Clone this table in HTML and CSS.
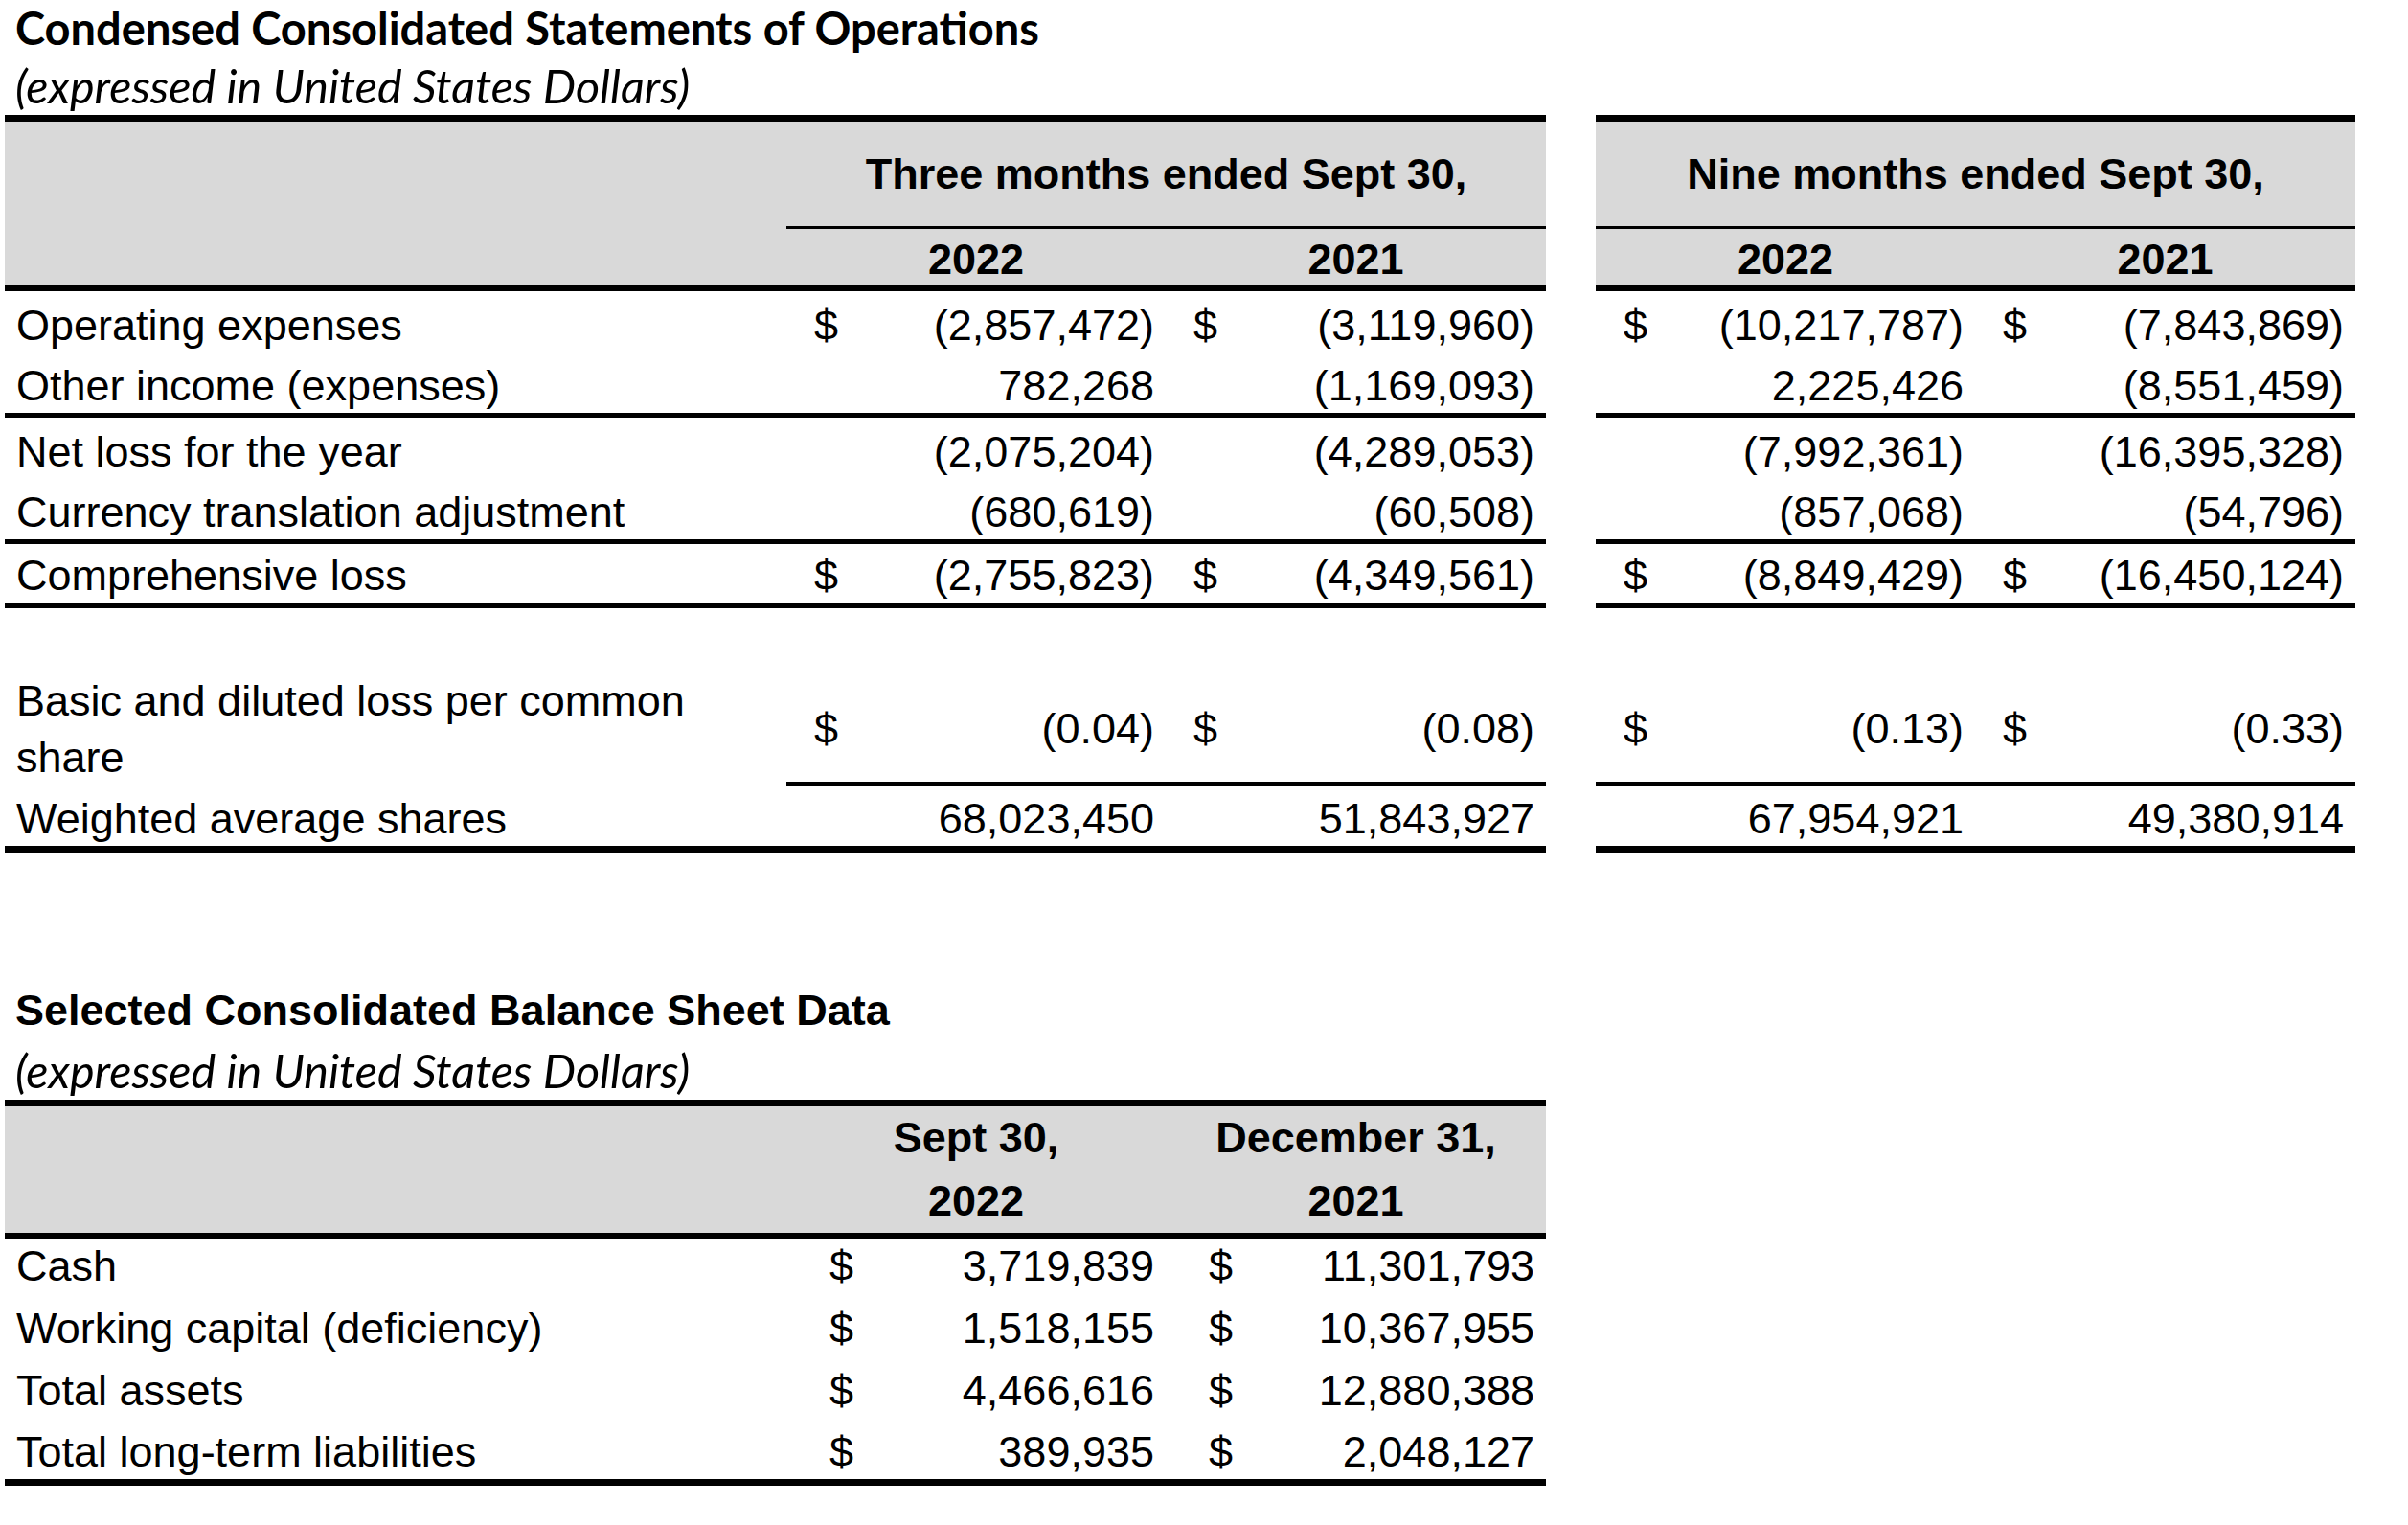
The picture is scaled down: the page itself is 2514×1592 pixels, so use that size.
FILE: index.html
```html
<!DOCTYPE html>
<html lang="en">
<head>
<meta charset="utf-8">
<title>Condensed Consolidated Statements of Operations</title>
<link rel="stylesheet" href="styles.css">
</head>
<body>
<div class="page">
  <div class="doc-title">Condensed Consolidated Statements of Operations</div>
  <div class="doc-sub">(expressed in United States Dollars)</div>

  <div class="stmt">
    <div class="row head1">
      <div class="c lab gray bt7"></div>
      <div class="c grp gray bt7 bb3">Three months ended Sept 30,</div>
      <div class="c gap"></div>
      <div class="c grp gray bt7 bb3">Nine months ended Sept 30,</div>
    </div>
    <div class="row head2">
      <div class="c lab gray bb6"></div>
      <div class="c yr gray bb6">2022</div>
      <div class="c yr gray bb6">2021</div>
      <div class="c gap"></div>
      <div class="c yr gray bb6">2022</div>
      <div class="c yr gray bb6">2021</div>
    </div>

    <div class="row r66 body">
      <div class="c lab">Operating expenses</div>
      <div class="c num"><span>$</span><span>(2,857,472)</span></div>
      <div class="c num"><span>$</span><span>(3,119,960)</span></div>
      <div class="c gap"></div>
      <div class="c num"><span>$</span><span>(10,217,787)</span></div>
      <div class="c num"><span>$</span><span>(7,843,869)</span></div>
    </div>
    <div class="row r66 body">
      <div class="c lab bb5">Other income (expenses)</div>
      <div class="c num bb5"><span class="v">782,268</span></div>
      <div class="c num bb5"><span class="v">(1,169,093)</span></div>
      <div class="c gap"></div>
      <div class="c num bb5"><span class="v">2,225,426</span></div>
      <div class="c num bb5"><span class="v">(8,551,459)</span></div>
    </div>
    <div class="row r66 body">
      <div class="c lab">Net loss for the year</div>
      <div class="c num"><span class="v">(2,075,204)</span></div>
      <div class="c num"><span class="v">(4,289,053)</span></div>
      <div class="c gap"></div>
      <div class="c num"><span class="v">(7,992,361)</span></div>
      <div class="c num"><span class="v">(16,395,328)</span></div>
    </div>
    <div class="row r66 body">
      <div class="c lab bb5">Currency translation adjustment</div>
      <div class="c num bb5"><span class="v">(680,619)</span></div>
      <div class="c num bb5"><span class="v">(60,508)</span></div>
      <div class="c gap"></div>
      <div class="c num bb5"><span class="v">(857,068)</span></div>
      <div class="c num bb5"><span class="v">(54,796)</span></div>
    </div>
    <div class="row r67 body">
      <div class="c lab bb6">Comprehensive loss</div>
      <div class="c num bb6"><span>$</span><span>(2,755,823)</span></div>
      <div class="c num bb6"><span>$</span><span>(4,349,561)</span></div>
      <div class="c gap"></div>
      <div class="c num bb6"><span>$</span><span>(8,849,429)</span></div>
      <div class="c num bb6"><span>$</span><span>(16,450,124)</span></div>
    </div>

    <div class="spacer"></div>

    <div class="row r120 body">
      <div class="c lab wrap">Basic and diluted loss per common<br>share</div>
      <div class="c num bb5"><span>$</span><span>(0.04)</span></div>
      <div class="c num bb5"><span>$</span><span>(0.08)</span></div>
      <div class="c gap"></div>
      <div class="c num bb5"><span>$</span><span>(0.13)</span></div>
      <div class="c num bb5"><span>$</span><span>(0.33)</span></div>
    </div>
    <div class="row r69 body">
      <div class="c lab bb7">Weighted average shares</div>
      <div class="c num bb7"><span class="v">68,023,450</span></div>
      <div class="c num bb7"><span class="v">51,843,927</span></div>
      <div class="c gap"></div>
      <div class="c num bb7"><span class="v">67,954,921</span></div>
      <div class="c num bb7"><span class="v">49,380,914</span></div>
    </div>
  </div>

  <div class="bs-title">Selected Consolidated Balance Sheet Data</div>
  <div class="doc-sub bs-sub">(expressed in United States Dollars)</div>

  <div class="bs">
    <div class="row bhead">
      <div class="c lab gray bt7 bb6"></div>
      <div class="c yr two gray bt7 bb6">Sept 30,<br>2022</div>
      <div class="c yr two gray bt7 bb6">December 31,<br>2021</div>
    </div>
    <div class="row r65 body">
      <div class="c lab">Cash</div>
      <div class="c num wide"><span>$</span><span>3,719,839</span></div>
      <div class="c num wide"><span>$</span><span>11,301,793</span></div>
    </div>
    <div class="row r65 body">
      <div class="c lab">Working capital (deficiency)</div>
      <div class="c num wide"><span>$</span><span>1,518,155</span></div>
      <div class="c num wide"><span>$</span><span>10,367,955</span></div>
    </div>
    <div class="row r65 body">
      <div class="c lab">Total assets</div>
      <div class="c num wide"><span>$</span><span>4,466,616</span></div>
      <div class="c num wide"><span>$</span><span>12,880,388</span></div>
    </div>
    <div class="row r69 body">
      <div class="c lab bb7">Total long-term liabilities</div>
      <div class="c num wide bb7"><span>$</span><span>389,935</span></div>
      <div class="c num wide bb7"><span>$</span><span>2,048,127</span></div>
    </div>
  </div>
</div>
</body>
</html>
```

FILE: styles.css
```css
html, body {
  margin: 0;
  padding: 0;
  background: #ffffff;
}

body {
  color: #000000;
  font-family: "Liberation Sans", Arial, sans-serif;
  font-size: 45px;
}

.page {
  padding-left: 5px;
  width: 2454px;
}

.doc-title {
  font-family: Lato, "Liberation Sans", sans-serif;
  font-weight: 700;
  font-size: 47px;
  height: 58px;
  line-height: 58px;
  padding-left: 11px;
  white-space: nowrap;
}

.doc-sub {
  font-family: Lato, "Liberation Sans", sans-serif;
  font-style: italic;
  font-size: 48.5px;
  height: 62px;
  line-height: 62px;
  padding-left: 11px;
  white-space: nowrap;
}

.bs-title {
  margin-top: 133px;
  font-weight: 700;
  font-size: 45px;
  height: 64px;
  line-height: 64px;
  padding-left: 11px;
  white-space: nowrap;
}

.bs-sub {
  height: 61px;
  line-height: 61px;
}

.row {
  display: grid;
  grid-template-columns: 816px 396px 397px 52px 396px 397px;
}

.bs .row {
  grid-template-columns: 816px 396px 397px;
}

.c {
  box-sizing: border-box;
  display: flex;
  align-items: center;
  white-space: nowrap;
  min-width: 0;
}

.head1 { height: 119px; }
.head2 { height: 65px; }
.r65 { height: 65px; }
.r66 { height: 66px; }
.r67 { height: 67px; }
.r69 { height: 69px; }
.r120 { height: 120px; }
.bhead { height: 139px; }

.spacer { height: 66px; }

.body .c {
  padding-top: 5px;
}

.gray { background: #d9d9d9; }

.bt7 { border-top: 7px solid #000; }
.bb3 { border-bottom: 3px solid #000; }
.bb5 { border-bottom: 5px solid #000; }
.bb6 { border-bottom: 6px solid #000; }
.bb7 { border-bottom: 7px solid #000; }

.lab {
  padding-left: 12px;
}

.lab.wrap {
  white-space: normal;
  line-height: 59px;
  padding-top: 0;
}

.grp {
  grid-column: span 2;
  justify-content: center;
  font-weight: 700;
}

.yr {
  justify-content: center;
  font-weight: 700;
  padding-top: 4px;
}

.yr.two {
  text-align: center;
  line-height: 66px;
  padding-top: 0;
}

.num {
  justify-content: space-between;
  padding-left: 29px;
  padding-right: 12px;
}

.num.wide {
  padding-left: 45px;
}

.num .v {
  margin-left: auto;
}
```
